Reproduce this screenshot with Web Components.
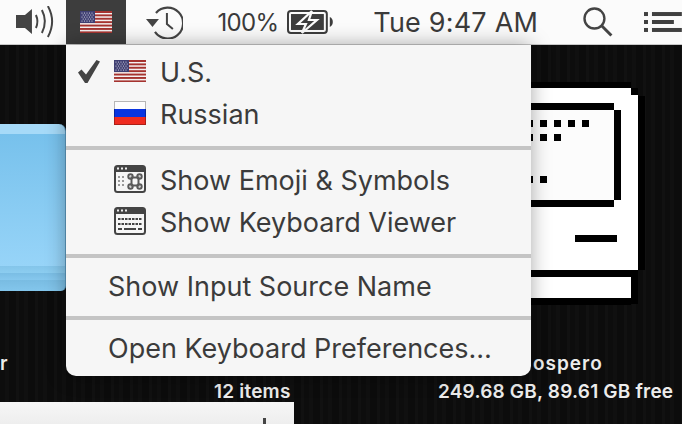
<!DOCTYPE html>
<html lang="en">
<head>
<meta charset="utf-8">
<title>Input menu</title>
<style>
  html, body { margin: 0; height: 100%; overflow: hidden; background: #0e0e0e; }
  body { font-family: Inter, "Liberation Sans", sans-serif; color: #3b3b3b; }
</style>
</head>
<body>
<template id="us-flag-t">
  <style>:host{display:block;width:32px;height:22px} svg{display:block}</style>
  <svg width="32" height="22" viewBox="0 0 32 22">
    <rect width="32" height="22" fill="#f4f1f1"/>
    <g fill="#a5332f"><rect width="32" height="2"/><rect y="3.4" width="32" height="1.9"/><rect y="6.8" width="32" height="1.9"/><rect y="10.2" width="32" height="1.9"/><rect y="13.6" width="32" height="1.9"/><rect y="17" width="32" height="1.9"/><rect y="20.4" width="32" height="1.6"/></g>
    <rect width="15" height="12" fill="#3f3f72"/>
    <g fill="#e4e4ee"><circle cx="2" cy="2" r=".6"/><circle cx="4.5" cy="2" r=".6"/><circle cx="7" cy="2" r=".6"/><circle cx="9.5" cy="2" r=".6"/><circle cx="12" cy="2" r=".6"/><circle cx="3.2" cy="4" r=".6"/><circle cx="5.7" cy="4" r=".6"/><circle cx="8.2" cy="4" r=".6"/><circle cx="10.7" cy="4" r=".6"/><circle cx="13.2" cy="4" r=".6"/><circle cx="2" cy="6" r=".6"/><circle cx="4.5" cy="6" r=".6"/><circle cx="7" cy="6" r=".6"/><circle cx="9.5" cy="6" r=".6"/><circle cx="12" cy="6" r=".6"/><circle cx="3.2" cy="8" r=".6"/><circle cx="5.7" cy="8" r=".6"/><circle cx="8.2" cy="8" r=".6"/><circle cx="10.7" cy="8" r=".6"/><circle cx="13.2" cy="8" r=".6"/><circle cx="2" cy="10" r=".6"/><circle cx="4.5" cy="10" r=".6"/><circle cx="7" cy="10" r=".6"/><circle cx="9.5" cy="10" r=".6"/><circle cx="12" cy="10" r=".6"/></g>
  </svg>
</template>
<template id="ru-flag-t">
  <style>:host{display:block;width:32px;height:24px} svg{display:block}</style>
  <svg width="32" height="24" viewBox="0 0 32 24">
    <rect width="32" height="8" fill="#fdfdfd"/>
    <rect y="8" width="32" height="8" fill="#0a35e0"/>
    <rect y="16" width="32" height="8" fill="#ef2b20"/>
    <rect x=".5" y=".5" width="31" height="23" fill="none" stroke="#000" stroke-opacity=".28"/>
  </svg>
</template>
<template id="emoji-icon-t">
  <style>:host{display:block;width:32px;height:28px} svg{display:block}</style>
  <svg width="32" height="28" viewBox="0 0 32 28">
    <rect x="1" y="1" width="30" height="26" rx="2.5" fill="#f6f6f6" stroke="#444" stroke-width="2"/>
    <rect x="1" y="1" width="30" height="6" fill="#444"/>
    <g fill="#eee"><rect x="3" y="2.5" width="2" height="2"/><rect x="7" y="2.5" width="2" height="2"/><rect x="11" y="2.5" width="2" height="2"/></g>
    <g fill="#999"><rect x="4" y="11" width="2" height="2"/><rect x="8" y="11" width="2" height="2"/><rect x="4" y="15" width="2" height="2"/><rect x="8" y="15" width="2" height="2"/><rect x="4" y="19" width="2" height="2"/><rect x="8" y="19" width="2" height="2"/></g>
    <g fill="none" stroke="#5a5a5a" stroke-width="2"><rect x="17.5" y="12.500" width="7" height="8"/><circle cx="16.500" cy="11.500" r="2.200"/><circle cx="25.500" cy="11.500" r="2.200"/><circle cx="16.500" cy="21.500" r="2.200"/><circle cx="25.500" cy="21.500" r="2.200"/></g>
  </svg>
</template>
<template id="keyboard-icon-t">
  <style>:host{display:block;width:32px;height:28px} svg{display:block}</style>
  <svg width="32" height="28" viewBox="0 0 32 28">
    <rect x="1" y="1" width="30" height="26" rx="2.500" fill="#f6f6f6" stroke="#444" stroke-width="2"/>
    <rect x="1" y="1" width="30" height="6" fill="#444"/>
    <g fill="#eee"><rect x="3" y="2.500" width="2" height="2"/><rect x="7" y="2.500" width="2" height="2"/><rect x="11" y="2.500" width="2" height="2"/></g>
    <path d="M4 12h24M4 17h24" stroke="#444" stroke-width="2" stroke-dasharray="2.500 1"/>
    <path d="M4 22h4M10 22h12M24 22h4" stroke="#444" stroke-width="2"/>
  </svg>
</template>
<template id="menu-bar-t">
  <style>
    :host{display:flex;align-items:stretch;height:44px;background:#fbfbfb;border-bottom:1px solid #c9c9c9;position:relative;overflow:hidden;
      font:27px/46px Inter,"Liberation Sans",sans-serif;color:#3b3b3b;white-space:nowrap}
    svg{display:block}
    .speaker{margin-left:16px;width:41px;align-self:center}
    .active{margin-left:9px;width:60px;background:#3d3d3d;display:flex;align-items:center;justify-content:center}
    .clock{margin-left:20px;width:38px;align-self:center}
    .pct{margin-left:34px;width:59px;font-size:24px;letter-spacing:-.7px}
    .batt{margin-left:11px;width:46px;align-self:center}
    .time{margin-left:40px;width:163px;letter-spacing:.2px}
    .search{margin-left:47px;width:30px;align-self:center}
    .list{margin-left:31px;width:38px;align-self:center}
  </style>
  <svg class="speaker" width="41" height="32" viewBox="0 0 41 32" aria-hidden="true">
    <path d="M0 9h9l7-6v25l-7-6H0z" fill="#444"/>
    <g fill="none" stroke="#444" stroke-width="2"><path d="M20 9q3 6.500 0 13"/><path d="M26 4q6 11.500 0 23"/><path d="M32 0q8.500 15.500 0 31"/></g>
  </svg>
  <div class="active"><us-flag></us-flag></div>
  <svg class="clock" width="38" height="34" viewBox="0 0 38 34" aria-hidden="true">
    <path d="M10 8A15.500 15.500 0 1 1 9 27" fill="none" stroke="#444" stroke-width="2.200"/>
    <path d="M0 14h13l-6.500 8z" fill="#444"/>
    <path d="M21 8v11l6 5" fill="none" stroke="#444" stroke-width="2"/>
  </svg>
  <span class="pct">100%</span>
  <svg class="batt" width="46" height="24" viewBox="0 0 46 24" aria-hidden="true">
    <rect x="1" y="1" width="39" height="22" rx="3" fill="none" stroke="#3d3d3d" stroke-width="2"/>
    <rect x="4" y="4" width="33" height="16" fill="#3d3d3d"/>
    <path d="M25 1 11 14h8l-4 9 15-13h-8z" fill="#3d3d3d" stroke="#fbfbfb" stroke-width="2.200" stroke-linejoin="miter"/>
    <path d="M43 7q3 1.500 3 5t-3 5z" fill="#3d3d3d"/>
  </svg>
  <span class="time">Tue 9:47 AM</span>
  <svg class="search" width="30" height="30" viewBox="0 0 30 30" aria-hidden="true">
    <circle cx="11.500" cy="11.500" r="10" fill="none" stroke="#444" stroke-width="2.400"/>
    <path d="M18.500 18.500 28.500 28.500" stroke="#444" stroke-width="3"/>
  </svg>
  <svg class="list" width="38" height="20" viewBox="0 0 38 20" aria-hidden="true">
    <g fill="#404040"><rect y="0" width="4" height="4"/><rect x="8" y="0" width="30" height="4"/><rect y="8" width="4" height="4"/><rect x="8" y="8" width="22" height="4"/><rect y="16" width="4" height="4"/><rect x="8" y="16" width="30" height="4"/></g>
  </svg>
</template>
<template id="menu-item-t">
  <style>
    :host{display:flex;align-items:center;height:42px;font:27px/42px Inter,"Liberation Sans",sans-serif;color:#3b3b3b;white-space:nowrap;padding-left:48px;position:relative}
    :host([plain]){padding-left:42px}
    .check{position:absolute;left:12px;top:9px;display:none}
    :host([checked]) .check{display:block}
    ::slotted([slot=icon]){margin:-2px 14px 0 0;flex:none}
    .label{margin-top:2px}
  </style>
  <svg class="check" width="22" height="23" viewBox="0 0 22 23" aria-hidden="true"><path d="M0 12.500 3.500 9.500 8 14.500 18.500 0 22 1.500 9.500 23H7z" fill="#444"/></svg>
  <slot name="icon"></slot><span class="label"><slot></slot></span>
</template>
<template id="menu-sep-t">
  <style>:host{display:block;height:4px;background:#c4c4c4}</style>
</template>
<template id="input-menu-t">
  <style>
    :host{display:block;position:absolute;left:66px;top:45px;width:465px;height:331px;background:#f6f6f6;border-radius:0 0 10px 10px;box-sizing:border-box;padding-top:6px;
      box-shadow:0 0 20px rgba(0,0,0,.35)}
    ::slotted(menu-sep){margin:11px 0 9px}
    ::slotted(.tight){margin:11px 0 7px}
    ::slotted(.last){margin:9px 0 7px}
  </style>
  <slot></slot>
</template>
<template id="mac-icon-t">
  <style>:host{display:block;position:absolute;left:500px;top:82px;width:145px;height:223px} svg{display:block}</style>
  <svg width="145" height="223" viewBox="0 0 145 223" shape-rendering="crispEdges" aria-hidden="true">
    <rect x="0" y="0" width="131" height="223" fill="#000"/>
    <rect x="131" y="6" width="7" height="216" fill="#000"/>
    <rect x="138" y="14" width="7" height="174" fill="#000"/>
    <rect x="0" y="6" width="131" height="182" fill="#fff"/><rect x="131" y="13" width="7" height="175" fill="#fff"/>
    <rect x="0" y="21" width="114" height="7" fill="#000"/>
    <rect x="114" y="28" width="7" height="90" fill="#000"/>
    <rect x="0" y="118" width="114" height="7" fill="#000"/>
    <rect x="0" y="28" width="114" height="90" fill="#fcfcfc"/>
    <g fill="#000">
      <rect x="26" y="38" width="7" height="7"/><rect x="40" y="38" width="7" height="7"/><rect x="54" y="38" width="7" height="7"/><rect x="68" y="38" width="7" height="7"/><rect x="82" y="38" width="7" height="7"/>
      <rect x="26" y="52" width="7" height="7"/><rect x="40" y="52" width="7" height="7"/><rect x="54" y="52" width="7" height="7"/>
      <rect x="26" y="94" width="7" height="7"/><rect x="40" y="94" width="7" height="7"/>
      <rect x="75" y="153" width="42" height="7"/>
    </g>
    <rect x="0" y="195" width="131" height="21" fill="#fff"/>
  </svg>
</template>
<template id="folder-icon-t">
  <style>
    :host{display:block;position:absolute;left:0;top:124px;width:66px;height:167px;border-radius:0 7px 5px 0;overflow:hidden;box-sizing:border-box;border-right:1px solid #5e9cc2;
      background:linear-gradient(#a6daf8 0 10px,#77c1ec 10px,#97d4f8 142px,#84c5ea 142px,#8ccdf0 149px,#7abde4 149px,#86c8ee 156px,#79bce2 156px,#83c6ec 100%)}
  </style>
</template>
<template id="desk-label-t">
  <style>
    :host{display:block;position:absolute;font:600 19px/22px Inter,"Liberation Sans",sans-serif;color:#ececec;white-space:nowrap;letter-spacing:.2px}
  </style>
  <slot></slot>
</template>
<template id="finder-window-t">
  <style>
    :host{display:block;position:absolute;left:0;top:402px;width:294px;height:22px;background:linear-gradient(#f6f6f6,#eeeeee);overflow:hidden}
    i{position:absolute;left:263px;top:16px;width:3px;height:8px;background:#444}
  </style>
  <i></i>
</template>
<template id="desktop-t">
  <style>
    :host{display:block;position:relative;width:682px;height:424px;overflow:hidden;
      background:repeating-linear-gradient(90deg,#0d0d0d 0 5px,#101010 5px 9px,#0c0c0c 9px 16px,#111 16px 19px)}
  </style>
  <slot></slot>
</template>

<mac-desktop>
  <folder-icon></folder-icon>
  <mac-icon></mac-icon>
  <desk-label style="left:0;top:353px">r</desk-label>
  <desk-label style="left:214px;top:381px">12 items</desk-label>
  <desk-label style="left:533px;top:353px;letter-spacing:1px">ospero</desk-label>
  <desk-label style="left:438px;top:381px">249.68 GB, 89.61 GB free</desk-label>
  <finder-window></finder-window>
  <menu-bar></menu-bar>
  <input-menu>
    <menu-item checked><us-flag slot="icon"></us-flag>U.S.</menu-item>
    <menu-item><ru-flag slot="icon"></ru-flag>Russian</menu-item>
    <menu-sep></menu-sep>
    <menu-item><emoji-icon slot="icon"></emoji-icon>Show Emoji &amp; Symbols</menu-item>
    <menu-item><keyboard-icon slot="icon"></keyboard-icon>Show Keyboard Viewer</menu-item>
    <menu-sep class="tight"></menu-sep>
    <menu-item plain>Show Input Source Name</menu-item>
    <menu-sep class="last"></menu-sep>
    <menu-item plain>Open Keyboard Preferences…</menu-item>
  </input-menu>
</mac-desktop>

<script>
  const map = {
    'us-flag':'us-flag-t','ru-flag':'ru-flag-t','emoji-icon':'emoji-icon-t','keyboard-icon':'keyboard-icon-t',
    'menu-bar':'menu-bar-t','menu-item':'menu-item-t','menu-sep':'menu-sep-t','input-menu':'input-menu-t',
    'mac-icon':'mac-icon-t','folder-icon':'folder-icon-t','desk-label':'desk-label-t','finder-window':'finder-window-t','mac-desktop':'desktop-t'
  };
  for (const [name, id] of Object.entries(map)) {
    customElements.define(name, class extends HTMLElement {
      constructor() {
        super();
        this.attachShadow({mode:'open'}).appendChild(document.getElementById(id).content.cloneNode(true));
      }
    });
  }
</script>
</body>
</html>
